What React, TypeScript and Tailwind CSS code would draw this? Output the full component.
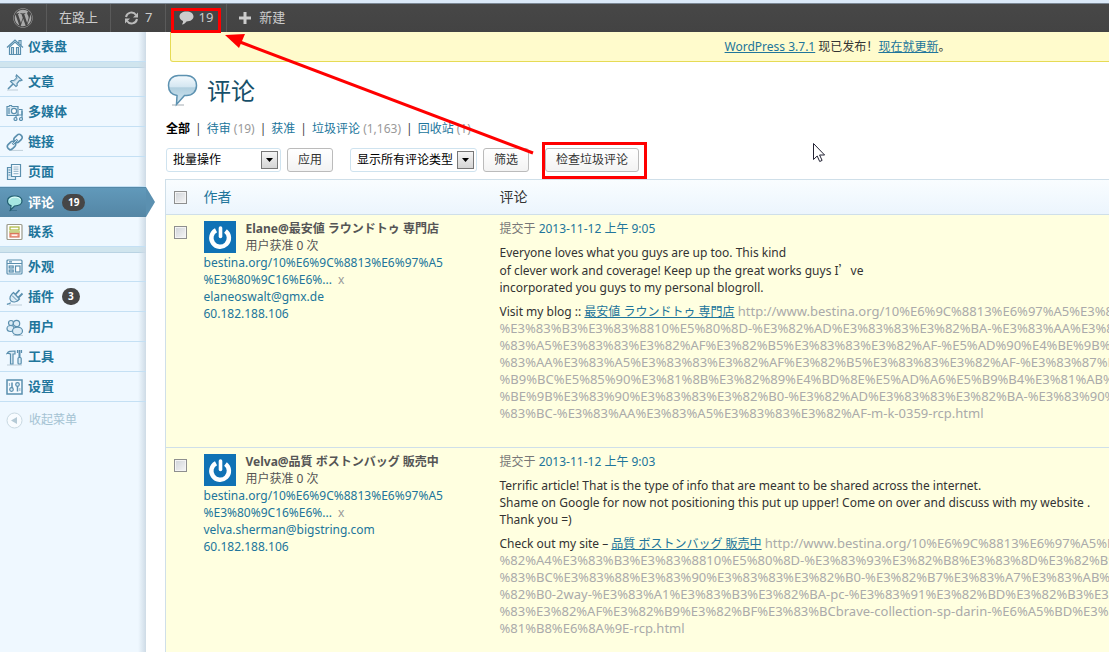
// src/App.tsx
import type { ReactNode } from "react";
import { FaWordpress } from "react-icons/fa";

type MenuItem = {
  label: string;
  icon: ReactNode;
  count?: number;
  active?: boolean;
};

type Comment = {
  id: number;
  author: string;
  email: string;
  time: string;
  body: ReactNode[];
  lead: string;
  link: string;
  url: string[];
};

const line = { fill: "#dcecf6", stroke: "#5a8fae", strokeWidth: 1.2 };

/* Admin menu icons, all drawn on an 18 x 18 grid */
const icons = {
  home: (
    <g {...line}>
      <path d="M3.5 9v7.5h11V9L9 4z" fill="#fff" />
      <path d="M1 9.5 9 2l8 7.500M13 5V2.500h2v5" fill="none" />
      <path d="M5.500 16V9.500h2V16M10.500 16V9.500h2V16" />
    </g>
  ),
  pin: (
    <g {...line}>
      <path d="M1 17h11" stroke="#c4d3dd" />
      <path d="m2 16 5-5" strokeWidth="1.6" />
      <path d="m10.500 2 5.500 5-1.500.8-1-.3-2.500 3 .2 2-1.200 1L4.500 8.500l1-1 2.200.2L10.800 5l-.8-1.500z" />
      <path d="m8 8 3-3" stroke="#8bb2c9" />
    </g>
  ),
  media: (
    <g {...line}>
      <path d="M1 3.500h2l.5-1h2l.5 1h6v9H1z" />
      <circle cx="8" cy="8" r="2.600" fill="#fff" />
      <path d="M3 5v6" />
      <path d="M10 16v-4m0 0h6V6.500h-3" fill="none" />
      <path d="M16 8v8" />
      <circle cx="9.500" cy="16" r="1.500" />
      <circle cx="15" cy="16" r="1.500" />
    </g>
  ),
  link: (
    <g {...line} fill="none">
      <path d="M3 17.500h14" stroke="#c4d3dd" />
      <rect x="7.500" y="2.500" width="9" height="6" rx="3" transform="rotate(-45 12 5.500)" strokeWidth="1.600" />
      <rect x="1" y="9.500" width="9" height="6" rx="3" transform="rotate(-45 5.500 12.500)" strokeWidth="1.600" />
      <path d="m6.500 11.500 5-5" strokeWidth="2.400" />
      <path d="m6.500 11.500 5-5" stroke="#dcecf6" strokeWidth=".8" />
    </g>
  ),
  pages: (
    <g {...line}>
      <path d="M1.500 4.500h8v12h-8z" />
      <path d="M5.500 1.500h9v12h-9z" fill="#f6fbff" />
      <path d="M7.500 4h5M7.500 6.200h5M7.500 8.400h5M7.500 10.600h5" stroke="#9dbccf" />
      <path d="M2.500 7h2M2.500 9.500h2M2.500 12h2" strokeWidth="1" />
    </g>
  ),
  comment: (
    <g>
      <path d="M3 16.500h8" stroke="#3e7391" />
      <path
        d="M8.500 2C4.500 2 1.500 3.500 1.500 7c0 2.500 1.500 4 3.500 4.600L4.500 16l4-4c5 0 7.500-2 7.500-5s-3-5-7.500-5z"
        fill="#a5e6e1"
        stroke="#215c6f"
        strokeWidth="1.200"
      />
      <path d="M3.500 6c.5-2 3-2.800 5.500-2.800S14 4 14.500 6" fill="none" stroke="#e2fffb" />
    </g>
  ),
  contact: (
    <g fill="#fff" strokeWidth="1.200">
      <rect x="1" y="1.500" width="15" height="15" rx="1" stroke="#9b9b8c" />
      <rect x="4" y="4" width="9" height="3" stroke="#a9b63c" />
      <path d="M3 9h11" stroke="#a9b63c" />
      <rect x="4" y="10.500" width="9" height="3.500" fill="#f7b7a5" stroke="#d9765d" />
      <path d="M6 12.200h5" stroke="#fff" />
    </g>
  ),
  appearance: (
    <g {...line}>
      <rect x="1" y="2" width="15" height="14" rx="1" fill="#f6fbff" />
      <path d="M1 5.500h15M3 3.800h3" />
      <rect x="3.200" y="8" width="4" height="2" />
      <rect x="3.200" y="12" width="4" height="2" />
      <rect x="9.500" y="8" width="4.500" height="6" fill="#fff" />
    </g>
  ),
  plugin: (
    <g {...line}>
      <path d="M3 17h13" stroke="#c4d3dd" />
      <path d="M1 16.500c1-1 3 0 3.500-2" fill="none" />
      <path d="m9 7 4.500-5M12 10l4.500-4.500" strokeWidth="1.800" />
      <path d="m7.500 4.500 6 6.500c-2.500 3-6 3.700-8.500 2C2.500 10.500 4.500 7 7.500 4.500z" />
      <path d="m6 7.500 5 5" strokeWidth="1" />
    </g>
  ),
  users: (
    <g {...line}>
      <path d="M7 17.500h10" stroke="#c4d3dd" />
      <circle cx="5" cy="5" r="2.500" />
      <ellipse cx="4.500" cy="10.500" rx="3.500" ry="3" />
      <circle cx="10.500" cy="5.500" r="3.200" />
      <ellipse cx="11.500" cy="13" rx="5" ry="3.800" />
    </g>
  ),
  tools: (
    <g {...line}>
      <path d="M1 17h15" stroke="#c4d3dd" />
      <path d="M1 5.500c1.500-2.500 3-2.500 8-2.500v3H7v10H4.500V6C3 5 2.500 5 1 5.500z" />
      <path d="M13.500 2v8" strokeWidth="2" />
      <rect x="12" y="9.500" width="3.200" height="6.500" rx="1" />
      <path d="M11.500 5V2M15.500 5V2" />
    </g>
  ),
  settings: (
    <g {...line}>
      <rect x="1" y="2" width="15" height="14" fill="#f6fbff" strokeWidth="1.500" />
      <path d="M6 4.500v6M11.500 13.500v-6" strokeWidth="1.500" />
      <circle cx="5.500" cy="11.500" r="1.800" />
      <circle cx="11.500" cy="6.500" r="1.800" />
      <path d="M3.500 5v3M13.800 10v3" stroke="#9dbccf" />
    </g>
  ),
};

const menuGroups: MenuItem[][] = [
  [{ label: "仪表盘", icon: icons.home }],
  [
    { label: "文章", icon: icons.pin },
    { label: "多媒体", icon: icons.media },
    { label: "链接", icon: icons.link },
    { label: "页面", icon: icons.pages },
    { label: "评论", icon: icons.comment, count: 19, active: true },
    { label: "联系", icon: icons.contact },
  ],
  [
    { label: "外观", icon: icons.appearance },
    { label: "插件", icon: icons.plugin, count: 3 },
    { label: "用户", icon: icons.users },
    { label: "工具", icon: icons.tools },
    { label: "设置", icon: icons.settings },
  ],
];

const filters = [
  { label: "待审", count: "(19)" },
  { label: "获准" },
  { label: "垃圾评论", count: "(1,163)" },
  { label: "回收站", count: "(1)" },
];

const comments: Comment[] = [
  {
    id: 1,
    author: "Elane@最安値 ラウンドトゥ 専門店",
    email: "elaneoswalt@gmx.de",
    time: "2013-11-12 上午 9:05",
    body: [
      "Everyone loves what you guys are up too. This kind",
      <>
        of clever work and coverage! Keep up the great works guys I
        <span className="font-['Noto_Sans_CJK_SC',sans-serif]">’</span>ve
      </>,
      "incorporated you guys to my personal blogroll.",
    ],
    lead: "Visit my blog ::",
    link: "最安値 ラウンドトゥ 専門店",
    url: [
      "http://www.bestina.org/10%E6%9C%8813%E6%97%A5%E3%80",
      "%E3%83%B3%E3%83%8810%E5%80%8D-%E3%82%AD%E3%83%83%E3%82%BA-%E3%83%AA%E3%83%",
      "%83%A5%E3%83%83%E3%82%AF%E3%82%B5%E3%83%83%E3%82%AF-%E5%AD%90%E4%BE%9B%E3%",
      "%83%AA%E3%83%A5%E3%83%83%E3%82%AF%E3%82%B5%E3%83%83%E3%82%AF-%E3%83%87%E3%",
      "%B9%BC%E5%85%90%E3%81%8B%E3%82%89%E4%BD%8E%E5%AD%A6%E5%B9%B4%E3%81%AB%E6%",
      "%BE%9B%E3%83%90%E3%83%83%E3%82%B0-%E3%82%AD%E3%83%83%E3%82%BA-%E3%83%90%E3%",
      "%83%BC-%E3%83%AA%E3%83%A5%E3%83%83%E3%82%AF-m-k-0359-rcp.html",
    ],
  },
  {
    id: 2,
    author: "Velva@品質 ボストンバッグ 販売中",
    email: "velva.sherman@bigstring.com",
    time: "2013-11-12 上午 9:03",
    body: [
      "Terrific article! That is the type of info that are meant to be shared across the internet.",
      "Shame on Google for now not positioning this put up upper! Come on over and discuss with my website .",
      "Thank you =)",
    ],
    lead: "Check out my site –",
    link: "品質 ボストンバッグ 販売中",
    url: [
      "http://www.bestina.org/10%E6%9C%8813%E6%97%A5%E3",
      "%82%A4%E3%83%B3%E3%83%8810%E5%80%8D-%E3%83%93%E3%82%B8%E3%83%8D%E3%82%B9%E",
      "%83%BC%E3%83%88%E3%83%90%E3%83%83%E3%82%B0-%E3%82%B7%E3%83%A7%E3%83%AB%E3%",
      "%82%B0-2way-%E3%83%A1%E3%83%B3%E3%82%BA-pc-%E3%83%91%E3%82%BD%E3%82%B3%E3%83",
      "%83%E3%82%AF%E3%82%B9%E3%82%BF%E3%83%BCbrave-collection-sp-darin-%E6%A5%BD%E3%82%",
      "%81%B8%E6%8A%9E-rcp.html",
    ],
  },
];

const buttonClass =
  "h-6 rounded-[3px] border border-[#bbb] bg-linear-to-b from-white to-[#f3f3f3] px-2.5 text-xs text-[#333]";
const checkboxClass =
  "block size-[13px] appearance-none border border-[#8e8f8f] bg-linear-to-br from-[#cfd3d8] to-[#f6f6f6] shadow-[inset_0_0_0_1px_#f4f4f4]";

function AdminBar() {
  return (
    <header>
      <div className="h-1 border-b border-[#7b8794] bg-[#dbe9f8]" />
      <nav className="flex h-7 bg-linear-to-b from-[#474747] to-[#434343] text-[13px] text-[#ccc] *:flex *:items-center *:border-r *:border-[#5a5a5a]">
        <a href="#about" aria-label="WordPress" className="w-[47px] justify-center">
          <FaWordpress size={20} className="text-[#aaa]" />
        </a>
        <a href="#site" className="px-3">在路上</a>
        <a href="#updates" className="gap-1.5 px-[13px]">
          <svg width="15" height="14" viewBox="0 0 15 14" fill="none" stroke="#bbb" strokeWidth="2">
            <path d="M2 6a5.500 5.500 0 0 1 10-2M13 8a5.500 5.500 0 0 1-10 2" />
            <path d="M14 1.500v5H9zM1 12.500v-5h5z" fill="#bbb" stroke="none" />
          </svg>
          7
        </a>
        <a href="#comments" className="gap-1 px-[13px]">
          <svg width="15" height="14" viewBox="0 0 15 14" fill="#ccc">
            <path d="M7.500.5C3.500.5.500 2.500.500 5.500c0 2.200 1.500 3.700 3.500 4.400.2 1.500-.5 2.700-1.200 3.600 2.200-.3 3.700-1.500 4.700-3.100 4 0 7-1.900 7-4.900s-3-5-7-5z" />
          </svg>
          19
        </a>
        <a href="#new" className="gap-2 border-none! px-3">
          <svg width="12" height="12" viewBox="0 0 12 12" stroke="#ccc" strokeWidth="3">
            <path d="M6 0v12M0 6h12" />
          </svg>
          新建
        </a>
      </nav>
    </header>
  );
}

function MenuRow({ label, icon, count, active }: MenuItem) {
  return (
    <li className="relative">
      <a
        href={`#${label}`}
        className={
          active
            ? "flex h-[30px] items-center gap-1 border-t border-[#5589a8] bg-linear-to-b from-[#6199ba] to-[#5486a5] pl-1.5 text-white"
            : "flex h-[30px] items-center gap-1 border-b border-[#c4e0f4] pl-1.5 text-[#21759b]"
        }
      >
        <svg width="18" height="18" viewBox="0 0 18 18">{icon}</svg>
        {label}
        {count !== undefined && (
          <span className="ml-1 flex h-[17px] items-center rounded-full bg-[#464646] px-1.5 text-[10px] text-white">
            {count}
          </span>
        )}
      </a>
      {active && (
        <svg className="absolute top-0 left-full z-10" width="9" height="30" viewBox="0 0 9 30">
          <path d="M0 0 9 15 0 30z" fill="#5b90b0" />
        </svg>
      )}
    </li>
  );
}

function Sidebar() {
  return (
    <aside className="relative w-[146px] shrink-0 bg-[#eff8ff] text-[13px] font-bold">
      <div className="pointer-events-none absolute inset-y-0 right-0 w-2 bg-linear-to-r from-transparent to-[#cedbe6]" />
      {menuGroups.map((group, i) => (
        <ul key={i} className={i > 0 ? "border-t-[5px] border-[#d0e5ee] shadow-[inset_0_1px_0_#b9d3e3]" : ""}>
          {group.map((item) => (
            <MenuRow key={item.label} {...item} />
          ))}
        </ul>
      ))}
      <button className="flex h-9 items-center gap-1.5 pl-1.5 text-xs font-normal text-[#a5c3d3]">
        <svg width="17" height="17" viewBox="0 0 17 17">
          <circle cx="8.500" cy="8.500" r="7.500" fill="#f8fcff" stroke="#c9d9e2" />
          <path d="M11 5v7L5 8.500z" fill="#b5cad6" />
        </svg>
        收起菜单
      </button>
    </aside>
  );
}

function Select({ label, width }: { label: string; width: string }) {
  return (
    <div className={`relative ${width}`}>
      <select
        aria-label={label}
        className="h-6 w-full appearance-none rounded-[3px] border border-[#cfe3ef] bg-white px-1.5 text-xs text-black"
      >
        <option>{label}</option>
      </select>
      <span className="pointer-events-none absolute top-[3px] right-[3px] flex h-[18px] w-[17px] items-center justify-center border border-[#777] bg-linear-to-b from-[#f5f5f5] to-[#d5d5d5]">
        <svg width="7" height="4" viewBox="0 0 7 4">
          <path d="M0 0h7L3.500 4z" />
        </svg>
      </span>
    </div>
  );
}

function Avatar() {
  return (
    <svg className="mt-px shrink-0" width="32" height="32" viewBox="0 0 32 32">
      <rect width="32" height="32" fill="#1072b5" />
      <path d="M12 9.200a8.800 8.800 0 1 0 9.500.8" fill="none" stroke="#fff" strokeWidth="4.400" />
      <path d="M16.500 7V15.500" stroke="#fff" strokeWidth="3.600" strokeLinecap="round" />
    </svg>
  );
}

function CommentRow({ comment }: { comment: Comment }) {
  return (
    <tr className="border-b border-[#cfdfe9] bg-[#ffffe0] align-top">
      <th className="px-2 pt-[11px] font-normal">
        <input type="checkbox" aria-label={comment.author} className={checkboxClass} />
      </th>
      <td className="px-[7px] pt-[5px] text-[#21759b]">
        <div className="flex gap-2.5">
          <Avatar />
          <div className="text-[#555]">
            <strong className="block">{comment.author}</strong>
            用户获准 0 次
          </div>
        </div>
        <a href="#author" className="block">
          bestina.org/10%E6%9C%8813%E6%97%A5
          <br />
          %E3%80%9C16%E6%...
          <span className="ml-1.5 text-[#999]">x</span>
        </a>
        <a href="#email" className="block">{comment.email}</a>
        <a href="#ip" className="block">60.182.188.106</a>
      </td>
      <td className="px-[7px] pt-[5px] pb-[25px] text-[#333]">
        <div className="text-[#777]">
          提交于 <a href="#time" className="text-[#21759b]">{comment.time}</a>
        </div>
        <p className="mt-[7px]">
          {comment.body.map((text, i) => (
            <span key={i} className="block">{text}</span>
          ))}
        </p>
        <p className="mt-[7px]">
          {comment.lead}{" "}
          <a href="#blog" className="text-[#21759b] underline">{comment.link}</a>{" "}
          <span className="text-[13px] leading-[17px] text-[#aaa]">
            {comment.url.map((text, i) => (
              <span key={text} className={i > 0 ? "block" : ""}>{text}</span>
            ))}
          </span>
        </p>
      </td>
    </tr>
  );
}

/* Red frames and arrow pointing at the pending comment count */
function Annotations() {
  return (
    <svg className="pointer-events-none absolute top-0 left-0 z-20" width="840" height="190" viewBox="0 0 840 190">
      <g fill="none" stroke="#f00" strokeWidth="3">
        <rect x="172.500" y="9.500" width="47" height="22" />
        <rect x="543.500" y="143.500" width="102" height="34" />
        <path d="M533 153 240 42" />
      </g>
      <path d="m225 35 20-1-6 14z" fill="#f00" />
      <path
        d="M813.500 143.500v16l3.700-3.500 2.500 5.500 2.400-1.100-2.500-5.400h5z"
        fill="#fff"
        stroke="#223"
      />
    </svg>
  );
}

export default function App() {
  return (
    <div className="relative flex min-h-screen flex-col overflow-hidden bg-white font-['Noto_Sans','Noto_Sans_CJK_SC',sans-serif]">
      <AdminBar />
      <div className="flex grow">
        <Sidebar />
        <main className="h-[calc(100vh-32px)] min-w-0 grow overflow-hidden pl-[19px]">
          <div className="min-w-[1340px] text-xs leading-[17px]">
            {/* Update notice */}
            <div className="ml-[5px] h-[30px] rounded-b-[3px] border border-t-0 border-[#e6db55] bg-[#fffbcc] text-center leading-[29px] text-[#333]">
              <a href="#release" className="text-[#21759b] underline">WordPress 3.7.1</a> 现已发布！
              <a href="#update" className="text-[#21759b] underline">现在就更新</a>。
            </div>

            {/* Page title */}
            <div className="flex h-[58px] items-center gap-2 pl-0.5">
              <svg width="32" height="34" viewBox="0 0 32 34">
                <defs>
                  <linearGradient id="bubble" x1="0" y1="0" x2="0" y2="1">
                    <stop offset="0" stopColor="#f4fafe" />
                    <stop offset=".4" stopColor="#d4e6f1" />
                    <stop offset=".42" stopColor="#b1cfdf" />
                    <stop offset="1" stopColor="#d4e8f3" />
                  </linearGradient>
                </defs>
                <path d="M5 31h12" stroke="#c3c9cd" strokeWidth="1.500" />
                <path
                  d="M11.500 1.500h8c6 0 10 4 10 10s-4 10-10 10h-2L9.500 30.500l.5-9C4.500 20.500 1.500 17 1.500 11.500c0-6 4-10 10-10z"
                  fill="url(#bubble)"
                  stroke="#5d92b1"
                  strokeWidth="1.500"
                />
              </svg>
              <h1 className="text-2xl text-[#174f69]">评论</h1>
            </div>

            {/* Status links */}
            <ul className="flex pl-px text-[#444]">
              <li className="font-bold text-black">全部</li>
              {filters.map(({ label, count }) => (
                <li key={label}>
                  <span className="px-[5px]">|</span>
                  <a href={`#${label}`} className="text-[#21759b]">
                    {label}
                    {count && <span className="text-[#999]"> {count}</span>}
                  </a>
                </li>
              ))}
            </ul>

            <div className="mt-[11px] flex pb-[7px] pl-px">
              <Select label="批量操作" width="w-[115px]" />
              <button className={`ml-1.5 ${buttonClass}`}>应用</button>
              <div className="ml-[17px]">
                <Select label="显示所有评论类型" width="w-[127px]" />
              </div>
              <button className={`ml-1.5 ${buttonClass}`}>筛选</button>
              <button className={`ml-4 ${buttonClass}`}>检查垃圾评论</button>
            </div>

            <table className="w-full table-fixed border-collapse border border-[#cfdfe9] whitespace-nowrap">
              <colgroup>
                <col className="w-[31px]" />
                <col className="w-[296px]" />
                <col />
              </colgroup>
              <thead>
                <tr className="h-[35px] border-b border-[#cfdfe9] bg-linear-to-b from-[#f9fdff] to-[#ecf5fd] text-left text-sm">
                  <th className="px-2">
                    <input type="checkbox" aria-label="全选" className={checkboxClass} />
                  </th>
                  <th className="px-[7px] font-normal text-[#21759b]">作者</th>
                  <th className="px-[7px] font-normal text-[#333]">评论</th>
                </tr>
              </thead>
              <tbody>
                {comments.map((comment) => (
                  <CommentRow key={comment.id} comment={comment} />
                ))}
              </tbody>
            </table>
          </div>
        </main>
      </div>
      <Annotations />
    </div>
  );
}
